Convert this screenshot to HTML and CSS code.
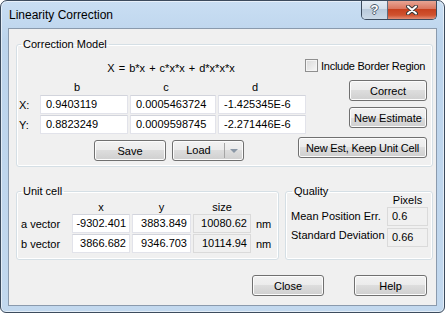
FILE: index.html
```html
<!DOCTYPE html>
<html lang="en">

<head>
    <meta charset="UTF-8">
    <title>Linearity Correction</title>
    <link rel="stylesheet" href="styles.css">
</head>

<body>

    <div class="window">

        <!-- Title bar -->
        <div class="titlebar">
            <span class="title">Linearity Correction</span>
            <div class="caption">
                <div class="cap-help">?</div>
                <div class="cap-close">
                    <svg width="12" height="10" viewBox="0 0 12 10">
                        <path d="M2 1.5 L10 8.5 M10 1.5 L2 8.5" stroke="#3a3a3a" stroke-width="4" stroke-linecap="round"/>
                        <path d="M2 1.5 L10 8.5 M10 1.5 L2 8.5" stroke="#fff" stroke-width="2" stroke-linecap="round"/>
                    </svg>
                </div>
            </div>
        </div>

        <div class="client">

            <!-- Correction model -->
            <fieldset class="group model">
                <legend>Correction Model</legend>
                <div class="model-top">
                    <div class="coeffs">
                        <div class="formula">X = b*x + c*x*x + d*x*x*x</div>
                        <div class="coeff-grid">
                            <span></span>
                            <span class="col-head">b</span>
                            <span class="col-head">c</span>
                            <span class="col-head">d</span>
                            <span class="row-label">X:</span>
                            <div class="field">0.9403119</div>
                            <div class="field">0.0005463724</div>
                            <div class="field">-1.425345E-6</div>
                            <span class="row-label">Y:</span>
                            <div class="field">0.8823249</div>
                            <div class="field">0.0009598745</div>
                            <div class="field">-2.271446E-6</div>
                        </div>
                    </div>
                    <div class="model-side">
                        <label class="check"><span class="check-box"></span>Include Border Region</label>
                        <button class="btn side-btn correct">Correct</button>
                        <button class="btn side-btn estimate">New Estimate</button>
                    </div>
                </div>
                <div class="model-bottom">
                    <button class="btn save">Save</button>
                    <button class="btn split"><span class="split-main">Load</span><span class="split-arrow"></span></button>
                    <button class="btn keep">New Est, Keep Unit Cell</button>
                </div>
            </fieldset>

            <div class="lower">

                <!-- Unit cell -->
                <fieldset class="group unit">
                    <legend>Unit cell</legend>
                    <div class="unit-grid">
                        <span></span>
                        <span class="col-head">x</span>
                        <span class="col-head">y</span>
                        <span class="col-head">size</span>
                        <span></span>
                        <span class="row-label">a vector</span>
                        <div class="field num">-9302.401</div>
                        <div class="field num">3883.849</div>
                        <div class="field num readonly">10080.62</div>
                        <span class="unit-label">nm</span>
                        <span class="row-label">b vector</span>
                        <div class="field num">3866.682</div>
                        <div class="field num">9346.703</div>
                        <div class="field num readonly">10114.94</div>
                        <span class="unit-label">nm</span>
                    </div>
                </fieldset>

                <!-- Quality -->
                <fieldset class="group quality">
                    <legend>Quality</legend>
                    <div class="quality-grid">
                        <span></span>
                        <span class="col-head">Pixels</span>
                        <span class="row-label">Mean Position Err.</span>
                        <div class="field readonly">0.6</div>
                        <span class="row-label">Standard Deviation</span>
                        <div class="field readonly">0.66</div>
                    </div>
                </fieldset>
            </div>

            <div class="footer">
                <button class="btn footer-btn">Close</button>
                <button class="btn footer-btn help">Help</button>
            </div>
        </div>
    </div>

</body>

</html>
```

FILE: styles.css
```css
/* Basic reset */
* {
    box-sizing: border-box;
}

body {
    margin: 0;
    font-family: 'Liberation Sans', Arial, sans-serif;
    font-size: 11px;
    color: #000;
    background: #fff;
}

/* Window frame */
.window {
    width: 445px;
    height: 313px;
    display: flex;
    flex-direction: column;
    padding: 0 7px 6px;
    border: 1px solid #3c4b5d;
    border-radius: 7px 7px 6px 6px;
    background: linear-gradient(#c9def3, #bcd4ec 40px, #c2d8ee);
    box-shadow: inset 0 0 0 1px rgba(255, 255, 255, 0.55);
    overflow: hidden;
}

.titlebar {
    height: 27px;
    display: flex;
    align-items: flex-start;
}

.title {
    font-size: 12px;
    line-height: 14px;
    margin: 7px 0 0 1px;
}

.caption {
    margin-left: auto;
    margin-top: -1px;
    height: 20px;
    display: flex;
    border: 1px solid #3c4b5d;
    border-top: none;
    border-radius: 0 0 5px 5px;
    overflow: hidden;
}

.cap-help {
    width: 26px;
    border-right: 1px solid #5d6d80;
    background: linear-gradient(#e6eef6, #d3dfeb 45%, #b9cadb 50%, #cbd9e7);
    color: #fff;
    font-weight: bold;
    font-size: 13px;
    line-height: 19px;
    text-align: center;
    text-shadow: 1px 0 0 #4d5d6e, -1px 0 0 #4d5d6e, 0 1px 0 #4d5d6e, 0 -1px 0 #4d5d6e;
}

.cap-close {
    width: 48px;
    display: flex;
    justify-content: center;
    align-items: center;
    background: linear-gradient(#e9ab9b, #da7760 45%, #c7411f 50%, #d0522f 80%, #e38e76);
}

/* Client area */
.client {
    flex: 1;
    display: flex;
    flex-direction: column;
    padding: 0 3px 9px 7px;
    border: 1px solid #8a9aad;
    background: #f0f0f0;
}

.group {
    margin: 0;
    min-width: 0;
    padding: 0 5px 5px 4px;
    border: 1px solid #d5dfe5;
    border-radius: 3px;
    box-shadow: inset 0 0 0 1px #fff;
}

.group legend {
    padding: 0 2px;
    line-height: 13px;
}

.field {
    height: 19px;
    padding: 0 5px;
    line-height: 17px;
    white-space: nowrap;
    overflow: hidden;
    background: #fff;
    border: 1px solid #e2e3ea;
    border-top-color: #d2d4dc;
}

.field.num {
    text-align: right;
    padding: 0 3px;
}

.field.readonly {
    background: #f0f0f0;
    border-color: #dadada;
}

.col-head {
    text-align: center;
    line-height: 12px;
}

.row-label {
    align-self: center;
}

/* Buttons */
.btn {
    height: 21px;
    padding: 0;
    font: inherit;
    color: #000;
    border: 1px solid #707070;
    border-radius: 3px;
    background: linear-gradient(#f2f2f2, #ebebeb 50%, #dddddd 50%, #cfcfcf);
    box-shadow: inset 0 0 0 1px #fcfcfc;
}

/* Correction model */
.model {
    margin-top: 9px;
    padding-top: 10px;
}

.model-top {
    display: flex;
}

.coeffs {
    width: 283px;
}

.formula {
    line-height: 14px;
    padding-left: 17px;
    text-align: center;
    word-spacing: 1px;
}

.coeff-grid {
    margin-top: 6px;
    display: grid;
    grid-template-columns: 17px 88px 86px 88px;
    grid-template-rows: 13px 19px 19px;
    gap: 1px 2px;
}

.coeff-grid .col-head {
    padding-right: 14px;
}

.coeff-grid .row-label {
    margin-left: -2px;
}

.model-side {
    flex: 1;
    margin-left: 1px;
    display: flex;
    flex-direction: column;
    align-items: flex-end;
}

.check {
    align-self: flex-start;
    margin-top: -2px;
    height: 13px;
    display: flex;
    align-items: center;
    gap: 3px;
    white-space: nowrap;
    letter-spacing: -0.25px;
}

.check-box {
    width: 13px;
    height: 13px;
    border: 1px solid #8f8f8f;
    background: linear-gradient(135deg, #d8d8d8, #f7f7f7);
    box-shadow: inset 0 0 0 1px #f4f4f4;
}

.side-btn {
    width: 78px;
}

.correct {
    margin-top: 8px;
}

.estimate {
    margin-top: 6px;
}

.model-bottom {
    margin-top: 3px;
    display: flex;
    align-items: flex-start;
}

.save {
    width: 72px;
    margin: 3px 0 0 73px;
}

.split {
    width: 72px;
    margin: 3px 0 0 6px;
    display: flex;
    align-items: stretch;
}

.split-main {
    flex: 1;
    margin: 2px 0;
    line-height: 15px;
    border-right: 1px solid #a5a5a5;
}

.split-arrow {
    width: 18px;
    display: flex;
    justify-content: center;
    align-items: center;
}

.split-arrow::after {
    content: "";
    border-left: 4px solid transparent;
    border-right: 4px solid transparent;
    border-top: 4px solid #8a97a6;
}

.keep {
    width: 129px;
    margin-left: auto;
    letter-spacing: -0.2px;
}

/* Unit cell and quality */
.lower {
    margin-top: 18px;
    display: flex;
}

.unit {
    width: 263px;
    padding-top: 3px;
    padding-bottom: 6px;
}

.unit-grid {
    display: grid;
    grid-template-columns: 49px 58px 59px 58px auto;
    grid-template-rows: 12px 19px 19px;
    gap: 1px 2px;
}

.unit-label {
    align-self: center;
    padding-left: 3px;
}

.quality {
    flex: 1;
    margin-left: 6px;
    padding-top: 0;
    padding-right: 4px;
}

.quality legend {
    margin-left: 2px;
}

.quality-grid {
    margin-top: -4px;
    display: grid;
    grid-template-columns: 1fr 41px;
    grid-template-rows: 12px 19px 19px;
    gap: 1px 0;
}

.quality-grid .row-label {
    padding-left: 1px;
    margin-top: -2px;
}

.quality-grid .field {
    padding: 0 4px;
}

.quality-grid .field + .row-label {
    margin-top: -4px;
}

.quality-grid .field:last-child {
    margin-top: 1px;
}

/* Footer buttons */
.footer {
    margin-top: auto;
    padding-right: 6px;
    display: flex;
    justify-content: flex-end;
    gap: 30px;
}

.footer-btn {
    width: 72px;
}

.footer-btn.help {
    width: 73px;
}
```
